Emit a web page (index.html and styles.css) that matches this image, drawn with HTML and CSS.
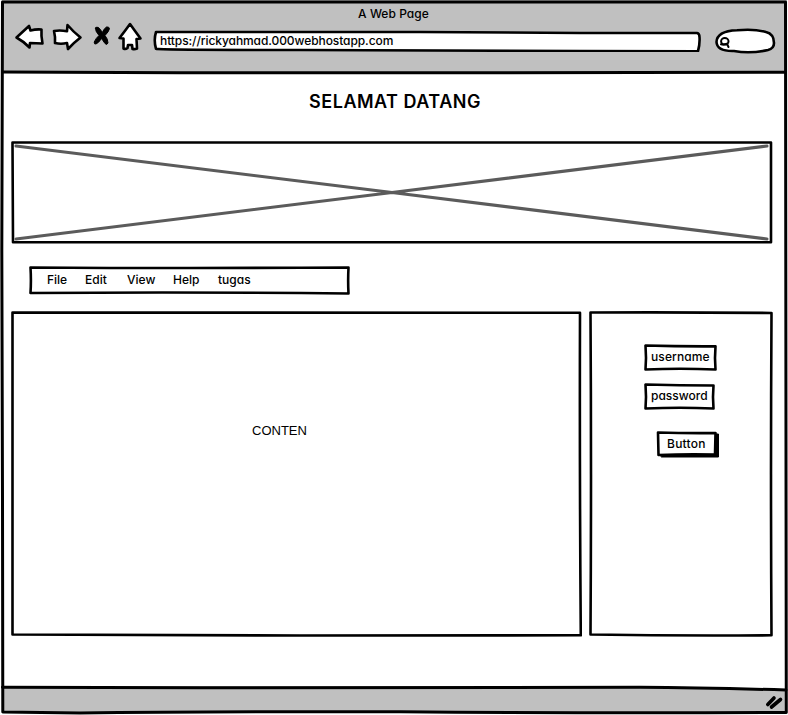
FILE: index.html
```html
<!DOCTYPE html>
<html lang="id">
<head>
<meta charset="utf-8">
<title>A Web Page</title>
<link rel="stylesheet" href="styles.css">
</head>
<body>
<div class="window">
  <header class="chrome">
    <div class="chrome-title"><span class="t-title">A Web Page</span></div>
    <div class="toolbar">
      <svg class="nav-icons" width="130" height="36" viewBox="14 19 130 36">
        <path d="M16.500 37.500 L29 26 L30.500 30.500 Q36 29 41.500 29.500 Q41 36 42.500 43.500 Q36 43 30 43 L29.500 47.500 Q23 41 16.500 37.500Z"/>
        <path d="M54 31 Q60 30 67 31.200 L67.500 25 Q73 31.500 80.500 37.500 Q74 42.500 68 49 L67 43 Q61 44.500 55 43 Q55.500 37 54 31Z"/>
        <path class="solid" d="M95.500 28 Q96.500 26.500 98.500 27.500 Q101 30 102.300 32.500 Q104 28.500 106.500 27 Q109 26.500 109.500 28.500 Q109 31.500 105 35.500 Q108 39 108 43 Q107 45.500 105 43.500 Q102.500 40 101.500 38.500 Q98.500 43 96 44 Q94 44.500 94.200 42 Q96 38 99 35.500 Q95 31 95.500 28Z"/>
        <path d="M130 24 Q125 31 119.500 38 L123.500 38.500 L123.500 48.500 Q125.500 49.500 127.500 48 L128 45 L132 45 L132.500 49 Q135 49.500 137 48.500 L136.500 39 L140.500 38.500 Q135 31 130 24Z"/>
      </svg>
      <div class="address">
        <svg class="sketch" width="548" height="22" viewBox="153 30 548 22"><path d="M156 32 Q300 31.500 420 32 T580 33 L697 33 Q699.500 33.500 699.500 37 Q700 44 698 51.200 L580 51 Q440 50 300 50 T156 48.800 Q153.500 40 156 32Z"/></svg>
        <span class="t-url">https://rickyahmad.000webhostapp.com</span>
      </div>
      <svg class="search" width="62" height="28" viewBox="714 27 62 28">
        <path d="M716.500 42 Q717 31 737 30.300 Q755 28.800 766 32 Q774 34 774 43 Q774 48.500 768 50 Q750 54 734 51 Q717 51.500 716.500 42Z"/>
        <ellipse cx="724.800" cy="41.300" rx="3.700" ry="3.300"/><path d="M721 44.300 Q724 44.800 727 43.800 L728.500 47"/>
      </svg>
    </div>
  </header>
  <main class="page">
    <h1><span class="t-h1">SELAMAT DATANG</span></h1>
    <div class="banner">
      <svg class="sketch" width="762" height="105" viewBox="11 140 762 105">
        <path d="M12.500 142.500 H771 V242.300 H13 Z"/>
        <path class="cross" d="M16 146 L392 192.500 L767 239 M16 239 L392 192.500 L767 146"/>
      </svg>
    </div>
    <nav class="menu">
      <svg class="sketch" width="322" height="29" viewBox="28 266 322 29"><path d="M30.500 267.500 Q190 268.500 348.500 267.500 Q347.800 281 348.500 293.500 Q190 291.800 30.500 293 Q31.300 281 30.500 267.500Z"/></svg>
      <span class="m-file">File</span><span class="m-edit">Edit</span><span class="m-view">View</span><span class="m-help">Help</span><span class="m-tugas">tugas</span>
    </nav>
    <div class="columns">
      <section class="content">
        <svg class="sketch" width="571" height="326" viewBox="11 311 571 326"><path d="M12.500 312.500 Q300 313.500 580 312.800 Q579.500 475 580.800 635.300 L300 635.500 L12.500 634.500 Q12.500 475 12.500 312.500Z"/></svg>
        <span class="t-content">CONTEN</span>
      </section>
      <aside class="login">
        <svg class="sketch" width="184" height="326" viewBox="589 311 184 326"><path d="M590.500 312.500 Q680 312 771.500 313 Q770.500 475 771.500 635.300 Q680 636 590.500 634.500 Q591.500 475 590.500 312.500Z"/></svg>
        <div class="field user">
          <svg class="sketch" width="73" height="27" viewBox="644 344 73 27"><path d="M645.500 345.500 Q680 346.500 715.500 346.300 Q714.500 358 715.500 369.500 Q680 368 645.500 369.500 Q646.500 358 645.500 345.500Z"/></svg>
          <span class="t-user">username</span>
        </div>
        <div class="field pass">
          <svg class="sketch" width="73" height="27" viewBox="644 383 73 27"><path d="M645.500 384.500 Q680 385.500 713.500 385.500 Q712.500 397 713.500 408.500 Q680 407 645.500 408.500 Q646.500 397 645.500 384.500Z"/></svg>
          <span class="t-pass">password</span>
        </div>
        <div class="field button">
          <svg class="sketch" width="64" height="28" viewBox="656 431 64 28"><path class="shadow" d="M661 434 H718.500 L718.500 457 H661.500Z"/><path d="M658 432.500 Q686 433.300 715.500 433 L715 454.500 Q686 453.800 658.500 455 Z"/></svg>
          <span class="t-button">Button</span>
        </div>
      </aside>
    </div>
  </main>
  <footer class="status">
    <svg width="20" height="16" viewBox="765 694 20 16"><path d="M767.800 704.500 L774 698 M771.500 707 L780.500 699.500"/></svg>
  </footer>
  <svg class="frame" width="788" height="715" viewBox="0 0 788 715">
    <path d="M2.500 2 H785.500 Q786 350 786.300 712.500 Q600 713.500 400 711.800 Q200 711.500 80 713 L2.800 712 L2.500 500 L1.800 250 Z"/>
    <path d="M3 72 L180 72.800 H440 L785 72.200"/>
    <path d="M2.500 687.300 L200 687.800 L640 687.300 Q700 687.500 786 690"/>
  </svg>
</div>
</body>
</html>
```
FILE: styles.css
```css
* { box-sizing: border-box; }
body { margin: 0; background: #fff; color: #000; font: 500 12px/18px Inter, sans-serif; font-feature-settings: "cv11" 1, "calt" 0; }
svg { display: block; fill: #fff; stroke: #000; stroke-width: 2.600; stroke-linejoin: round; stroke-linecap: round; flex: none; }
span { position: relative; white-space: nowrap; }
.window { position: relative; width: 788px; height: 715px; display: flex; flex-direction: column; overflow: hidden; }
.frame { position: absolute; inset: 0; fill: none; stroke-width: 3; pointer-events: none; }
.frame path { fill: none; }
.chrome { height: 73px; margin: 0 1px 0 2px; background: #c0c0c0; padding-top: 5px; }
.chrome-title { height: 14px; padding-right: 2px; text-align: center; line-height: 17px; letter-spacing: .05px; }
.toolbar { display: flex; padding-left: 12px; height: 36px; }
.nav-icons .solid { fill: #000; stroke-width: 1; }
.address { position: relative; width: 548px; height: 22px; margin: 11px 13px 0 9px; padding: 2px 0 0 7px; letter-spacing: -.08px; }
.sketch { position: absolute; left: 0; top: 0; }
.search { margin-top: 8px; }
.search ellipse, .search ellipse + path { fill: none; stroke-width: 2; }
.page { flex: 1; padding: 0 15px 0 11px; }
h1 { margin: 0; height: 67px; padding: 17px 0 0 6px; text-align: center; font-size: 18px; line-height: 24px; font-weight: 600; letter-spacing: .5px; }
.banner { position: relative; height: 105px; }
.cross { stroke: #5b5b5b; stroke-width: 3; fill: none; }
.menu { position: relative; width: 322px; height: 29px; margin: 21px 0 16px 17px; padding: 5px 0 0 19px; display: flex; }
.m-file { width: 38px; }
.m-edit { width: 42px; }
.m-view { width: 46px; }
.m-help { width: 45px; }
.columns { display: flex; gap: 7px; }
.content { position: relative; width: 571px; height: 326px; padding: 111px 0 0 241px; font: 13px/18px "Liberation Sans", sans-serif; }
.login { position: relative; width: 184px; height: 326px; padding: 33px 0 0 55px; }
.field { position: relative; width: 73px; height: 27px; padding: 4px 0 0 7px; letter-spacing: .1px; }
.pass { margin-top: 12px; letter-spacing: 0; }
.button { width: 64px; height: 28px; margin: 21px 0 0 12px; padding-left: 11px; letter-spacing: .25px; }
.shadow { fill: #000; stroke-width: 1; }
.status { height: 28px; margin: 0 1px 2px 2px; background: #c0c0c0; display: flex; justify-content: flex-end; padding: 9px 2px 0 0; clip-path: polygon(0 1px, 82% 1px, 100% 4px, 100% 100%, 0 100%); }
.status svg { stroke-width: 3.600; fill: none; }
```
